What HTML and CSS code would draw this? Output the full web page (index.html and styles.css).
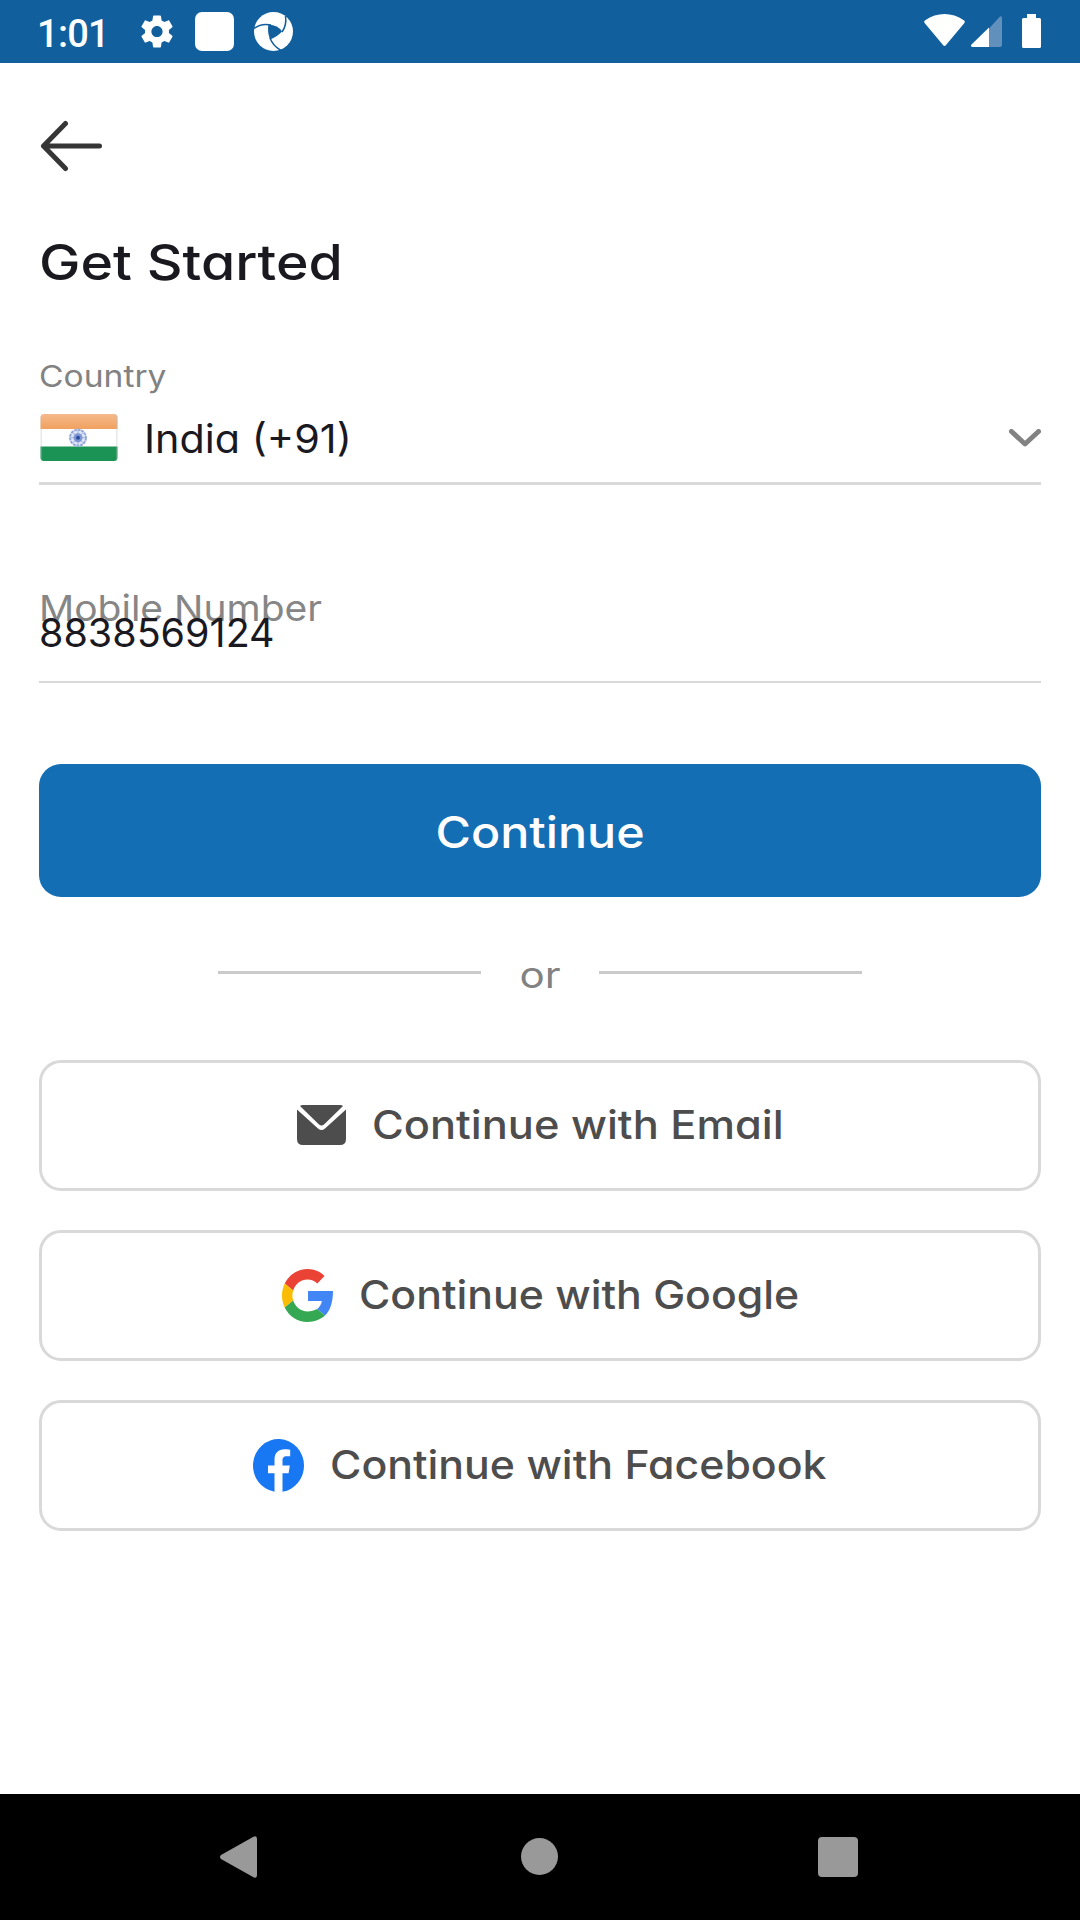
FILE: index.html
```html
<!DOCTYPE html>
<html lang="en">
<head>
<meta charset="utf-8">
<title>Get Started</title>
<link rel="stylesheet" href="styles.css">
</head>
<body>
<header class="status">
  <span class="clock">1:01</span>
  <svg class="gear" viewBox="2 2 20 20"><path fill="#fff" d="M19.43 12.98c.04-.32.07-.64.07-.98s-.03-.66-.07-.98l2.11-1.65c.19-.15.24-.42.12-.64l-2-3.46c-.12-.22-.39-.3-.61-.22l-2.49 1c-.52-.4-1.08-.73-1.69-.98l-.38-2.65C14.46 2.18 14.25 2 14 2h-4c-.25 0-.46.18-.49.42l-.38 2.65c-.61.25-1.17.59-1.69.98l-2.49-1c-.23-.09-.49 0-.61.22l-2 3.46c-.13.22-.07.49.12.64l2.11 1.65c-.04.32-.07.65-.07.98s.03.66.07.98l-2.11 1.65c-.19.15-.24.42-.12.64l2 3.46c.12.22.39.3.61.22l2.49-1c.52.4 1.08.73 1.69.98l.38 2.65c.03.24.24.42.49.42h4c.25 0 .46-.18.49-.42l.38-2.65c.61-.25 1.17-.59 1.69-.98l2.49 1c.23.09.49 0 .61-.22l2-3.46c.12-.22.07-.49-.12-.64l-2.11-1.65zM12 15.500c-1.930 0-3.500-1.570-3.500-3.500s1.570-3.500 3.500-3.500 3.500 1.570 3.500 3.500-1.570 3.500-3.500 3.500z"/></svg>
  <span class="tile"></span>
  <svg class="swirl" viewBox="0 0 39 39"><circle cx="19.500" cy="19.500" r="19.500" fill="#fff"/><g fill="none" stroke="#115f9d" stroke-width="1.500"><path d="M0 16.500Q7 11 17 13"/><path d="M31.500 4Q33 13 28 20"/><path d="M27 38.500Q19 34 16 26"/></g><path fill="#115f9d" d="M14.500 12.500Q24 13 28 19.500Q23 25 16 27.500Q13 19 14.500 12.500Z"/></svg>
  <span class="spacer"></span>
  <svg class="wifi" viewBox="0 0 41 32"><path fill="#fff" d="M1 9.500C-.2 8.300-.1 7.200 1.200 6.200C13-2 28-2 39.800 6.200C41.100 7.200 41.200 8.300 40 9.500L22 31C21 32.200 20 32.200 19 31Z"/></svg>
  <svg class="signal" viewBox="0 0 31 31"><path fill="#6290bd" d="M18 12.500L28.500 1Q31-1 31 2V29Q31 31 29 31H18Z"/><path fill="#fff" d="M18 11.500V31H2Q-1 31 .5 28.500Z"/></svg>
  <svg class="battery" viewBox="0 0 19 34"><path fill="#fff" d="M5 0H14V4H17.500Q19 4 19 5.500V32.500Q19 34 17.500 34H1.500Q0 34 0 32.500V5.500Q0 4 1.500 4H5Z"/></svg>
</header>
<main class="page">
  <svg class="back" viewBox="0 0 62 52"><path fill="none" stroke="#363637" stroke-width="5" stroke-linecap="round" stroke-linejoin="round" d="M25.500 3.500L3.500 26L25.500 48.500M3.500 26H59.500"/></svg>
  <h1 class="title">Get Started</h1>
  <div class="label">Country</div>
  <div class="select">
    <svg class="flag" viewBox="0 0 78 47"><defs><linearGradient id="saffron" x2="0" y2="1"><stop stop-color="#f5b98c"/><stop offset="1" stop-color="#f0a160"/></linearGradient><clipPath id="round"><rect x=".5" width="77" height="47" rx="3.500"/></clipPath></defs><g clip-path="url(#round)"><path fill="#fff" d="M0 0H78V47H0Z"/><path fill="url(#saffron)" d="M0 0H78V15H0Z"/><path fill="#1a9355" d="M0 32.500H78V47H0Z"/><path stroke="#bbb" stroke-opacity=".65" d="M1 0V47M77 0V47"/></g><g transform="translate(38 23.700)"><circle r="8" fill="#dfe5f4" stroke="#93a8da" stroke-width="1.900" stroke-dasharray="3 .7"/><path stroke="#91a5d8" stroke-width=".8" d="M-7 0H7M0-7V7M-5-5L5 5M-5 5L5-5"/><circle r="4.500" fill="#7f97d0"/><circle r="2" fill="#294da3"/></g></svg>
    <span class="country">India (+91)</span>
    <svg class="chevron" viewBox="0 0 32 18"><path fill="none" stroke="#828282" stroke-width="5" stroke-linecap="round" stroke-linejoin="round" d="M2.500 2.500L16 15L29.500 2.500"/></svg>
  </div>
  <div class="field">
    <div class="hint">Mobile Number</div>
    <div class="number">8838569124</div>
  </div>
  <button class="primary"><span class="primary-text">Continue</span></button>
  <div class="divider"><i class="rule"></i><span class="or">or</span><i class="rule"></i></div>
  <div class="options">
    <button class="option email">
      <svg class="mail" viewBox="0 0 49 40"><path fill="#4d4d4d" d="M3 1Q4 0 6 0H43Q45 0 46 1L27 19.500Q24.500 21.500 22 19.500ZM0 4.500L21 23.500Q24.500 26.500 28 23.500L49 4.500V34Q49 40 43 40H6Q0 40 0 34Z"/></svg>
      <span class="caption">Continue with Email</span>
    </button>
    <button class="option google">
      <svg class="logo" viewBox="0 0 48 48" preserveAspectRatio="none"><path fill="#EA4335" d="M24 9.500c3.540 0 6.710 1.220 9.210 3.600l6.850-6.850C35.900 2.380 30.470 0 24 0 14.620 0 6.510 5.380 2.560 13.220l7.980 6.190C12.430 13.720 17.740 9.500 24 9.500z"/><path fill="#4285F4" d="M48 20H24.500v9h13c-.5 3-2 5.500-4.500 7.200l7.500 6C45 38 48 31 48 20z"/><path fill="#FBBC05" d="M10.530 28.590c-.48-1.450-.76-2.990-.76-4.590s.27-3.140.76-4.590l-7.980-6.190C.92 16.460 0 20.120 0 24c0 3.880.92 7.540 2.560 10.780l7.970-6.190z"/><path fill="#34A853" d="M24 48c6.480 0 11.930-2.130 16.500-5.800l-7.500-6c-2.500 1.450-5.760 2.300-9 2.300-6.260 0-11.570-4.220-13.470-9.910l-7.980 6.190C6.510 42.620 14.620 48 24 48z"/></svg>
      <span class="caption">Continue with Google</span>
    </button>
    <button class="option facebook">
      <svg class="logo" viewBox="0 0 51 53"><path fill="#1877f2" d="M51 26.500A25.500 26.500 0 1 0 21.500 52.700V34.200H15V26.500H21.500V20.500C21.500 14 25.500 10.300 31.500 10.300C34.500 10.300 37.200 10.800 37.200 10.800V17.300H33.700C30.500 17.300 29.500 19.200 29.500 21.500V26.500H36.800L35.600 34.200H29.500V52.700A25.800 26.500 0 0 0 51 26.500Z"/></svg>
      <span class="caption">Continue with Facebook</span>
    </button>
  </div>
</main>
<footer class="nav">
  <svg class="nav-back" viewBox="0 0 37 42"><path fill="#999" d="M1 19L33.500 .7Q37-1 37 3V39Q37 43 33.500 41.300L1 23Q-1 21 1 19Z"/></svg>
  <span class="nav-home"></span>
  <span class="nav-recent"></span>
</footer>
</body>
</html>
```
FILE: styles.css
```css
* { box-sizing: border-box; }
body {
  margin: 0;
  width: 1080px;
  height: 1920px;
  display: flex;
  flex-direction: column;
  overflow: hidden;
  background: #fff;
  color: #1a191f;
  font-family: Inter, "Open Sans", sans-serif;
  font-feature-settings: "cv11";
}
svg { display: block; flex: none; }
.status {
  height: 63px;
  flex: none;
  display: flex;
  align-items: center;
  padding: 0 39px 0 37px;
  background: #115f9d;
}
.clock {
  width: 104px;
  color: #fff;
  font: 500 38px/44px Roboto, sans-serif;
  letter-spacing: -.7px;
  padding-top: 4px;
}
.gear { width: 32px; height: 33px; margin-right: 22px; }
.tile { width: 39px; height: 39px; border-radius: 7px; background: #fff; margin-right: 19.5px; }
.swirl { width: 39px; height: 39px; }
.spacer { flex: 1; }
.wifi { width: 41px; height: 32px; margin: 0 6px 3px 0; }
.signal { width: 31px; height: 31px; margin-right: 20px; }
.battery { width: 19px; height: 34px; margin-bottom: 2px; }

.page { flex: 1; padding: 57px 39px 0; }
.back { width: 62px; height: 52px; margin-left: 1px; }

.title, .label, .country, .hint, .number, .caption { width: fit-content; transform-origin: 0 50%; }
.title {
  margin: 61px 0 0;
  font-size: 49px;
  line-height: 60px;
  font-weight: 500;
  transform: scaleX(1.132);
}
.label {
  margin-top: 63px;
  font-size: 30px;
  line-height: 40px;
  color: #828282;
  transform: scaleX(1.12);
}
.select {
  height: 89px;
  display: flex;
  align-items: center;
  border-bottom: 3px solid #d9d9d9;
}
.flag { width: 78px; height: 47px; margin: 0 0 3px .5px; }
.country { margin: 0 auto 0 26px; font-size: 39px; line-height: 48px; transform: scaleX(1.06); }
.chevron { width: 32px; height: 18px; margin-bottom: 2px; }
.field { margin-top: 101px; padding-bottom: 24px; border-bottom: 2px solid #d9d9d9; }
.hint {
  font-size: 36px;
  line-height: 44px;
  color: #868686;
  transform: scaleX(1.083);
}
.number { margin-top: -21px; font-size: 39px; line-height: 48px; transform: scaleX(1.012); }
button {
  display: flex;
  align-items: center;
  justify-content: center;
  width: 100%;
  font-family: inherit;
  font-feature-settings: inherit;
  font-weight: 500;
}
.primary {
  height: 133px;
  margin-top: 81px;
  padding: 3px 0 0;
  border: 0;
  border-radius: 22px;
  background: #146eb4;
  color: #fff;
  font-size: 44px;
}
.primary-text { transform: scaleX(1.1); }
.divider { height: 39px; margin-top: 56px; display: flex; align-items: center; justify-content: center; }
.rule { width: 263px; height: 3px; background: #cacaca; }
.or {
  width: 118px;
  padding-top: 5px;
  text-align: center;
  font-size: 36px;
  line-height: 36px;
  color: #828282;
  transform: scaleX(1.17);
}
.options { margin-top: 68px; display: grid; gap: 39px; }
.option {
  height: 131px;
  padding: 0;
  border: 3px solid #d9d9d9;
  border-radius: 22px;
  background: #fff;
  color: #4d4d4d;
  font-size: 40px;
  gap: 26px;
}
.caption { margin-bottom: 2px; }
.email .caption { margin-right: 32px; transform: scaleX(1.084); }
.google .caption { margin-right: 28px; transform: scaleX(1.069); }
.facebook .caption { margin-right: 32px; transform: scaleX(1.07); }
.mail { width: 49px; height: 40px; margin-bottom: 1px; }
.logo { width: 51px; height: 53px; }
.nav {
  height: 126px;
  flex: none;
  display: flex;
  align-items: center;
  justify-content: space-between;
  padding: 0 222px 0 220px;
  background: #000;
}
.nav-back { width: 37px; height: 42px; }
.nav-home { width: 37px; height: 37px; margin: 0 0 1px 4px; border-radius: 50%; background: #999; }
.nav-recent { width: 40px; height: 40px; border-radius: 4px; background: #999; }
```
